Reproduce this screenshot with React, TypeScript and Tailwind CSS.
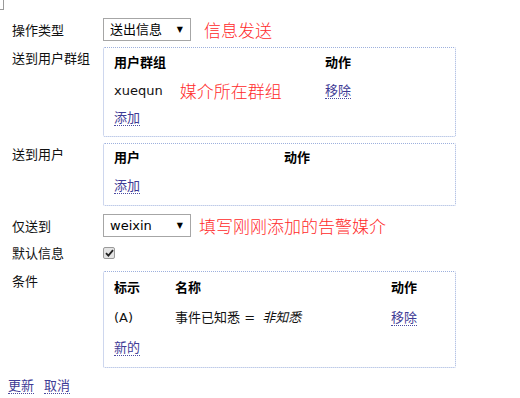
import React from "react"

const font = { fontFamily: '"DejaVu Sans", "Noto Sans CJK SC", sans-serif' }

function Link({ children }: { children: React.ReactNode }) {
  return (
    <span className="cursor-pointer border-b border-dotted border-[#4a4aa0] leading-[15px] text-[#3f3c96]">
      {children}
    </span>
  )
}

function FakeSelect({ value }: { value: string }) {
  return (
    <div className="flex h-[23px] w-[88px] shrink-0 items-center justify-between border border-[#a6a6a6] bg-white pl-[6px] pr-[7px] text-[13px] text-black">
      <span>{value}</span>
      <span className="text-[8px] leading-none">▼</span>
    </div>
  )
}

function Note({ children, className = "" }: { children: React.ReactNode; className?: string }) {
  return (
    <span className={"pt-[3px] text-[17px] font-light leading-none text-[#ff2a2a] " + className}>{children}</span>
  )
}

export default function App() {
  return (
    <div className="h-[398px] w-[520px] overflow-hidden bg-white text-[13px] text-[#111]" style={font}>
      <div className="h-[10px] w-[4px] border-b border-r border-[#9a9a9a]" />

      {/* 操作类型 */}
      <div className="mt-[8px] flex items-center">
        <div className="w-[103px] shrink-0 pl-3 pt-[2px]">操作类型</div>
        <FakeSelect value="送出信息" />
        <Note className="ml-[13px]">信息发送</Note>
      </div>

      {/* 送到用户群组 */}
      <div className="mt-[6px] flex">
        <div className="w-[103px] shrink-0 pl-3 pt-[2px] leading-[20px]">送到用户群组</div>
        <div className="w-[353px] rounded-[2px] border border-dotted border-[#9db0dd] pb-[5px] pl-[10px] pt-[1px]">
          <div className="grid h-[28px] grid-cols-[211px_1fr] items-center font-bold text-black">
            <span>用户群组</span>
            <span>动作</span>
          </div>
          <div className="grid h-[28px] grid-cols-[211px_1fr] items-center">
            <span className="flex items-center">
              xuequn
              <Note className="ml-[17px]">媒介所在群组</Note>
            </span>
            <span>
              <Link>移除</Link>
            </span>
          </div>
          <div className="flex h-[26px] items-center">
            <Link>添加</Link>
          </div>
        </div>
      </div>

      {/* 送到用户 */}
      <div className="mt-[6px] flex">
        <div className="w-[103px] shrink-0 pl-3 pt-[2px] leading-[20px]">送到用户</div>
        <div className="w-[353px] rounded-[2px] border border-dotted border-[#9db0dd] pb-[4px] pl-[10px]">
          <div className="grid h-[27px] grid-cols-[170px_1fr] items-center font-bold text-black">
            <span>用户</span>
            <span>动作</span>
          </div>
          <div className="flex h-[30px] items-center">
            <Link>添加</Link>
          </div>
        </div>
      </div>

      {/* 仅送到 */}
      <div className="mt-[8px] flex items-center">
        <div className="w-[103px] shrink-0 pl-3 pt-[2px]">仅送到</div>
        <FakeSelect value="weixin" />
        <Note className="ml-[8px]">填写刚刚添加的告警媒介</Note>
      </div>

      {/* 默认信息 */}
      <div className="mt-[6px] flex h-[20px] items-center">
        <div className="w-[103px] shrink-0 pl-3 pt-[1px]">默认信息</div>
        <span className="flex h-[12px] w-[12px] items-center justify-center rounded-[2px] border border-[#9a9a9a] bg-[#e4e4e4]">
          <svg width="9" height="8" viewBox="0 0 9 8">
            <path d="M1 4.2 L3.4 6.6 L8 1.2" fill="none" stroke="#222" strokeWidth="1.8" />
          </svg>
        </span>
      </div>

      {/* 条件 */}
      <div className="mt-[8px] flex">
        <div className="w-[103px] shrink-0 pl-3 pt-[1px] leading-[20px]">条件</div>
        <div className="w-[353px] rounded-[2px] border border-dotted border-[#9db0dd] pb-[5px] pl-[10px] pt-[2px]">
          <div className="grid h-[28px] grid-cols-[61px_216px_1fr] items-center font-bold text-black">
            <span>标示</span>
            <span>名称</span>
            <span>动作</span>
          </div>
          <div className="grid h-[32px] grid-cols-[61px_216px_1fr] items-center">
            <span>(A)</span>
            <span>
              事件已知悉 = <i className="ml-[3px]">非知悉</i>
            </span>
            <span>
              <Link>移除</Link>
            </span>
          </div>
          <div className="flex h-[28px] items-center">
            <Link>新的</Link>
          </div>
        </div>
      </div>

      <div className="mt-[10px] flex gap-[10px] pl-2">
        <Link>更新</Link>
        <Link>取消</Link>
      </div>
    </div>
  )
}
